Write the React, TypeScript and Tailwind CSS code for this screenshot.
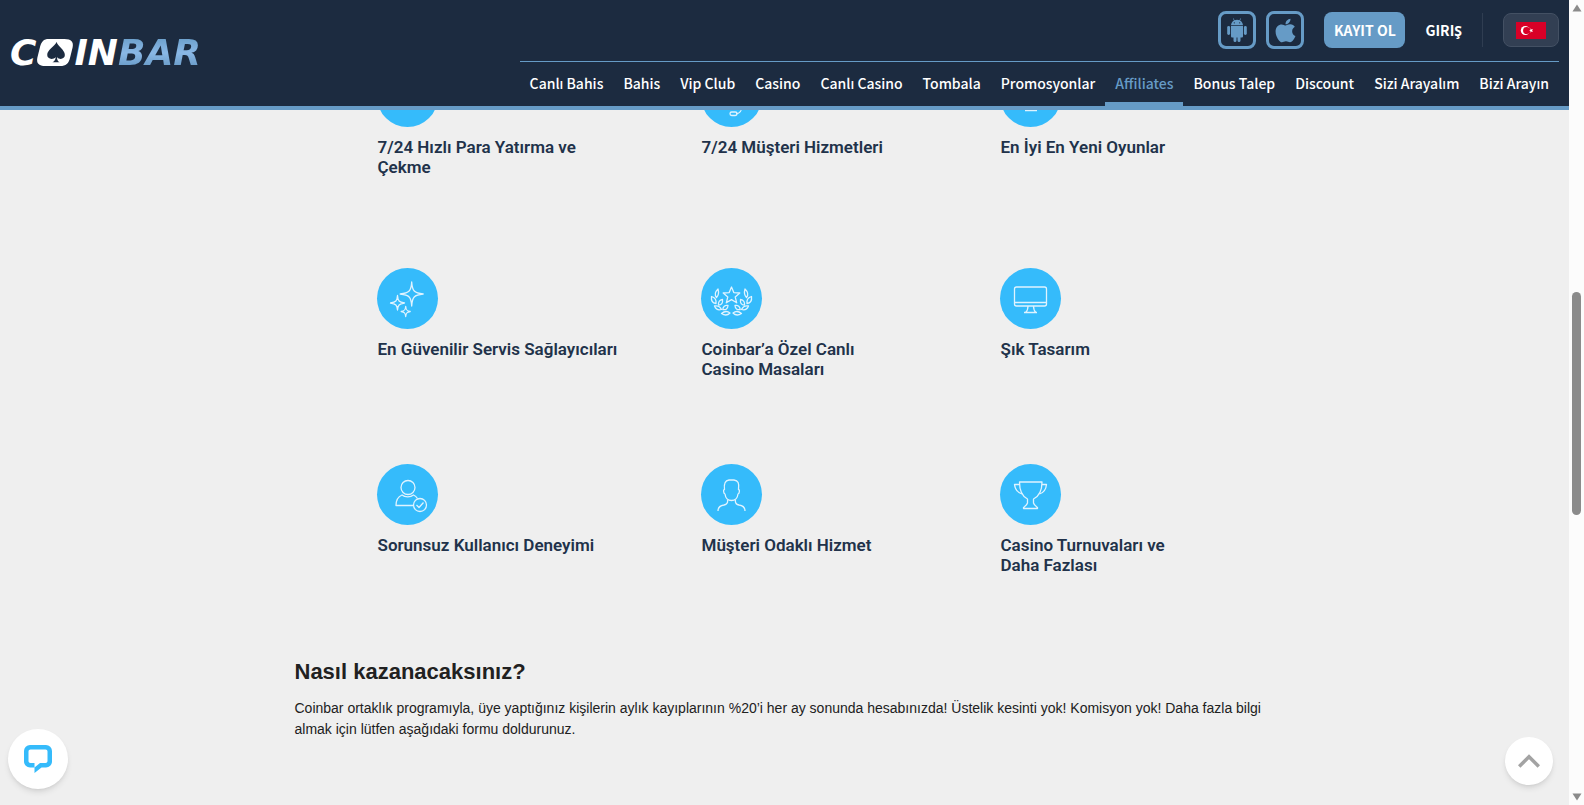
import * as React from "react";
import { FaApple } from "react-icons/fa";

const NAV_ITEMS = [
  "Canlı Bahis",
  "Bahis",
  "Vip Club",
  "Casino",
  "Canlı Casino",
  "Tombala",
  "Promosyonlar",
  "Affiliates",
  "Bonus Talep",
  "Discount",
  "Sizi Arayalım",
  "Bizi Arayın",
];

const CashIcon = () => (
  <>
    <rect x="18" y="20" width="26" height="16" rx="2" />
    <circle cx="31" cy="28" r="4" />
  </>
);

const SupportIcon = () => (
  <>
    <path d="M18 32v-4a13 13 0 0 1 26 0v4" />
    <rect x="16" y="29" width="5" height="10" rx="2" />
    <rect x="41" y="29" width="5" height="10" rx="2" />
    <path d="M41 39c0 5-1 8-6 9" />
    <rect x="29" y="46" width="7" height="3.5" rx="1.7" />
  </>
);

const GamesIcon = () => (
  <>
    <rect x="18" y="16" width="25" height="22" rx="2" />
    <path d="M25 44.500h12" />
  </>
);

const SparkleIcon = () => (
  <>
    <path d="M34.700 14c.5 9 2.500 11 11.500 12-9 1-11 3-11.500 12-.5-9-2.500-11-11.500-12 9-1 11-3 11.500-12Z" />
    <path d="M20.500 27.500c.4 5.500 1.500 6.500 7 7.500-5.500.9-6.600 2-7 7-.4-5-1.500-6.100-7-7 5.500-1 6.600-2 7-7.500Z" />
    <path d="M28.700 38.500c.3 3.500 1.200 4.500 4.500 5-3.300.5-4.200 1.500-4.500 5-.3-3.500-1.200-4.500-4.500-5 3.300-.5 4.200-1.500 4.500-5Z" />
  </>
);

const LaurelHalf = () => (
  <>
    <path d="M17 21c-3 3-3.500 6-1.500 8.500 2-2 2.500-5 1.500-8.500Z" />
    <path d="M10.500 28.500c-.5 4 1 6.500 4.500 7 .5-3.500-1-6-4.500-7Z" />
    <path d="M21.500 31.500c-3 .5-4.500 2.500-4 5.500 3 0 4.500-2 4-5.500Z" />
    <path d="M13.500 38c1.500 3.500 4 4.500 7 3.500-1.500-3-4-4.200-7-3.500Z" />
    <path d="M27 37.500c-3.200-.5-5 1-5.200 4 3 .8 5-.8 5.200-4Z" />
    <path d="M20.500 45.500c3-2.500 6-2.500 8.500-.5-2.500 2.500-5.500 2.500-8.500.5Z" />
  </>
);

const LaurelIcon = () => (
  <>
    <path d="m30.500 19 2.300 5.600 6 .4-4.600 3.900 1.500 5.900-5.200-3.200-5.200 3.200 1.500-5.900-4.600-3.900 6-.4Z" />
    <LaurelHalf />
    <g transform="matrix(-1 0 0 1 61 0)">
      <LaurelHalf />
    </g>
  </>
);

const MonitorIcon = () => (
  <>
    <rect x="14.500" y="19" width="32" height="19" rx="2" />
    <path d="M14.500 34.500h32M28 38c0 3-.8 5-2.500 6.500h10.500c-1.700-1.500-2.500-3.500-2.500-6.500M24 44.500h13" />
  </>
);

const UserCheckIcon = () => (
  <>
    <circle cx="31" cy="23.500" r="7" />
    <path d="M36 41.500H19c0-5.500 2.500-9 6-10.500 3 2.500 8.500 2.500 11.500 0 1.500.7 3 2 4 3.500" />
    <circle cx="43" cy="41" r="6.500" />
    <path d="m39.500 41 2.500 2.500 4.500-5" />
  </>
);

const PersonIcon = () => (
  <>
    <path d="M23.500 25.500C22.500 19 25 16.500 28 16h5c4 .5 5.500 3 4.500 9.500 1.500 0 1 4-.5 4.500-.5 4-3 6.500-6.500 6.500S24.500 34 24 30c-1.500-.5-2-4.500-.5-4.500Z" />
    <path d="M26.500 35.500c.5 3-.5 5-3.500 5.500-4 .5-6 2-6 6M34.500 35.500c-.5 3 .5 5 3.500 5.500 4 .5 6 2 6 6" />
  </>
);

const TrophyIcon = () => (
  <>
    <path d="M19.500 18h22.500c0 9-2.500 14-8.500 17v4c.5 2 2 3 4 4.500v1h-14v-1c2-1.500 3.500-2.500 4-4.500v-4c-6-3-8-8-8-17Z" />
    <path d="M20 20.500h-5.500c.5 5 3 8 7.500 9.500M42 20.500h4.500c-.5 5-2.500 8-7 9.500" />
  </>
);

const FEATURE_ROWS = [
  [
    { label: "7/24 Hızlı Para Yatırma ve Çekme", icon: CashIcon },
    { label: "7/24 Müşteri Hizmetleri", icon: SupportIcon },
    { label: "En İyi En Yeni Oyunlar", icon: GamesIcon },
  ],
  [
    { label: "En Güvenilir Servis Sağlayıcıları", icon: SparkleIcon },
    { label: "Coinbar’a Özel Canlı Casino Masaları", icon: LaurelIcon },
    { label: "Şık Tasarım", icon: MonitorIcon },
  ],
  [
    { label: "Sorunsuz Kullanıcı Deneyimi", icon: UserCheckIcon },
    { label: "Müşteri Odaklı Hizmet", icon: PersonIcon },
    { label: "Casino Turnuvaları ve Daha Fazlası", icon: TrophyIcon },
  ],
];

function Logo() {
  return (
    <a
      href="#"
      className="flex font-['DejaVu_Sans',sans-serif] text-[36px] leading-9 font-bold text-white italic"
    >
      <span>C</span>
      {/* The O carries the spade */}
      <span className="relative w-[38px] text-center">
        O
        <svg viewBox="0 0 36 26" className="absolute top-1 left-0 h-[27px] w-[38px]" aria-hidden="true">
          <path d="M12 0h15c7 0 9 3 8 8l-2.500 10c-1.300 5.500-4 8-9.500 8H9C2 26 0 23 1 18L3.500 8C5 2.500 7 0 12 0Z" fill="#fff" />
          <path d="M19.500 3c1.500 4.500 8 7.500 8 12.500 0 4-5.500 5-7.500 1.800 0 2.700.5 4.200 2.500 5.200h-7c2-1 3-2.500 3.200-5.200-2.500 3.200-8.200 2.200-8.200-1.800C10.500 10.500 17.500 7.500 19.500 3Z" fill="#1c2b40" />
        </svg>
      </span>
      <span>IN</span>
      <span className="bg-linear-to-b from-[#669bc6] via-[#8ab8e6] to-[#5f93bf] bg-clip-text pr-1 text-transparent">
        BAR
      </span>
    </a>
  );
}

function AndroidIcon() {
  return (
    <svg viewBox="0 0 20 24" className="h-6 w-5" fill="currentColor" aria-hidden="true">
      <path d="M4 7.300C4.200 4.900 5.300 3.300 7 2.400L5.900.6l.5-.3 1.200 1.900a6.500 6.500 0 0 1 4.800 0L13.600.3l.5.3L13 2.400c1.700.9 2.800 2.500 3 4.900ZM7.300 4.200a.6.6 0 1 0 0 1.300.6.6 0 0 0 0-1.300Zm5.400 0a.6.6 0 1 0 0 1.300.6.6 0 0 0 0-1.300Z" fillRule="evenodd" />
      <path d="M4 8h12v10.200c0 .8-.6 1.300-1.300 1.300H13.500v3a1.500 1.500 0 0 1-3 0v-3h-1v3a1.500 1.500 0 0 1-3 0v-3H5.300c-.7 0-1.300-.5-1.300-1.300Z" />
      <rect x="0.200" y="8" width="2.900" height="9" rx="1.450" />
      <rect x="16.900" y="8" width="2.900" height="9" rx="1.450" />
    </svg>
  );
}

function Header() {
  return (
    <header className="relative z-10 flex h-[110px] shrink-0 items-center justify-between border-b-4 border-[#669bc6] bg-[#1c2b40] px-[10px] font-['Noto_Sans_CJK_JP','Noto_Sans',sans-serif]">
      <Logo />

      <div className="flex h-full flex-col">
        <div className="flex h-[61px] items-center justify-end pb-px">
          <div className="flex gap-[10px]">
            <button aria-label="Android" className="flex size-[38px] items-center justify-center rounded-lg border-3 border-[#669bc6] text-[#669bc6]">
              <AndroidIcon />
            </button>
            <button aria-label="iOS" className="flex size-[38px] items-center justify-center rounded-lg border-3 border-[#669bc6] text-[#669bc6]">
              <FaApple size={27} />
            </button>
          </div>
          <button className="ml-5 h-9 w-[81px] rounded-lg bg-[#669bc6] text-sm font-bold text-white">KAYIT OL</button>
          <button className="ml-5 text-sm font-bold text-white">GIRIŞ</button>
          <div className="mx-5 h-[34px] w-px bg-[#2f3d51]" />
          <button aria-label="Türkçe" className="flex h-[34px] w-14 items-center justify-center rounded-lg border border-[#435063] bg-[#323f53]">
            <svg viewBox="0 0 30 17" className="h-[17px] w-[30px]">
              <path fill="#d80027" d="M0 0h30v17H0z" />
              <circle cx="9.300" cy="8.500" r="4.500" fill="#fff" />
              <circle cx="10.700" cy="8.500" r="3.600" fill="#d80027" />
              <path fill="#fff" d="m13 8.500 1.500-.5V6.300l1 1.300 1.500-.5-.9 1.400.9 1.400-1.500-.5-1 1.300V9Z" />
            </svg>
          </button>
        </div>

        <nav className="flex flex-1 border-t border-[#669bc6] text-sm font-medium">
          {NAV_ITEMS.map((item) => (
            <a
              key={item}
              href="#"
              className={`flex items-center border-b-4 px-[10px] pt-0.5 whitespace-nowrap ${
                item === "Affiliates" ? "border-[#669bc6] text-[#669bc6]" : "border-transparent text-white"
              }`}
            >
              {item}
            </a>
          ))}
        </nav>
      </div>
    </header>
  );
}

function Feature({ label, icon: Icon }: { label: string; icon: React.ComponentType }) {
  return (
    <div className="max-w-[250px] font-['Roboto',sans-serif] not-first:max-w-[200px]">
      <svg viewBox="0 0 61 61" fill="none" stroke="#dff3ff" strokeWidth="1.300" strokeLinejoin="round" className="size-[61px] rounded-full bg-[#35bbfb]" aria-hidden="true">
        <Icon />
      </svg>
      <h3 className="mt-[10px] min-h-10 pl-px text-[17px] leading-5 font-semibold text-[#21324a]">{label}</h3>
    </div>
  );
}

function Scrollbar() {
  return (
    <div className="flex w-[15px] shrink-0 flex-col items-center bg-[#fcfcfc] py-1" aria-hidden="true">
      <svg viewBox="0 0 10 8" className="h-2 w-[10px]" fill="#8b8b8b">
        <path d="M5 0.500 9.500 7.500h-9Z" />
      </svg>
      <div className="mt-[280px] h-[223px] w-[9px] rounded-full bg-[#8b8b8b]" />
      <svg viewBox="0 0 10 8" className="mt-auto h-2 w-[10px]" fill="#8b8b8b">
        <path d="M5 7.500 9.500 0.500h-9Z" />
      </svg>
    </div>
  );
}

export default function App() {
  return (
    <div className="flex h-screen w-full overflow-hidden bg-[#efefef]">
      <div className="relative flex min-w-0 flex-1 flex-col">
        <Header />

        {/* Content is scrolled under the header */}
        <main className="mx-auto -mt-11 w-full max-w-[980px]">
          <section className="pl-[82px]">
            {FEATURE_ROWS.map((row, i) => (
              <div key={i} className="mb-[85px] grid grid-cols-[324px_299px_1fr] first:mb-[91px] last:mb-[81px]">
                {row.map((feature) => (
                  <Feature key={feature.label} {...feature} />
                ))}
              </div>
            ))}
          </section>

          <section className="font-['Liberation_Sans',sans-serif] text-[#212121]">
            <h2 className="text-[22px] leading-8 font-bold">Nasıl kazanacaksınız?</h2>
            <p className="mt-[10px] text-sm leading-[21px]">
              Coinbar ortaklık programıyla, üye yaptığınız kişilerin aylık kayıplarının %20’i her ay sonunda hesabınızda! Üstelik kesinti yok! Komisyon yok! Daha fazla bilgi almak için lütfen aşağıdaki formu doldurunuz.
            </p>
          </section>
        </main>

        <button aria-label="Chat" className="absolute bottom-4 left-2 flex size-[60px] items-center justify-center rounded-full bg-white shadow-md">
          <svg viewBox="0 0 28 28" className="size-7" fill="#35bbfb" fillRule="evenodd">
            <path d="M6 0h16a6 6 0 0 1 6 6v10.500a6 6 0 0 1-6 6h-4.500L10.500 28v-5.500H6a6 6 0 0 1-6-6V6a6 6 0 0 1 6-6Zm.5 4.500c-1.200 0-2 .8-2 2v9.500c0 1.200.8 2 2 2h4v4.500l5.500-4.500h5.500c1.200 0 2-.8 2-2V6.500c0-1.200-.8-2-2-2Z" />
          </svg>
        </button>
        <button aria-label="Yukarı" className="absolute right-4 bottom-5 flex size-12 items-center justify-center rounded-full bg-white shadow-md">
          <svg viewBox="0 0 22 14" className="h-[14px] w-[22px]" fill="none" stroke="#a3a3a3" strokeWidth="3.500">
            <path d="m1.200 12.500 9.800-9.800 9.800 9.800" />
          </svg>
        </button>
      </div>
      <Scrollbar />
    </div>
  );
}
